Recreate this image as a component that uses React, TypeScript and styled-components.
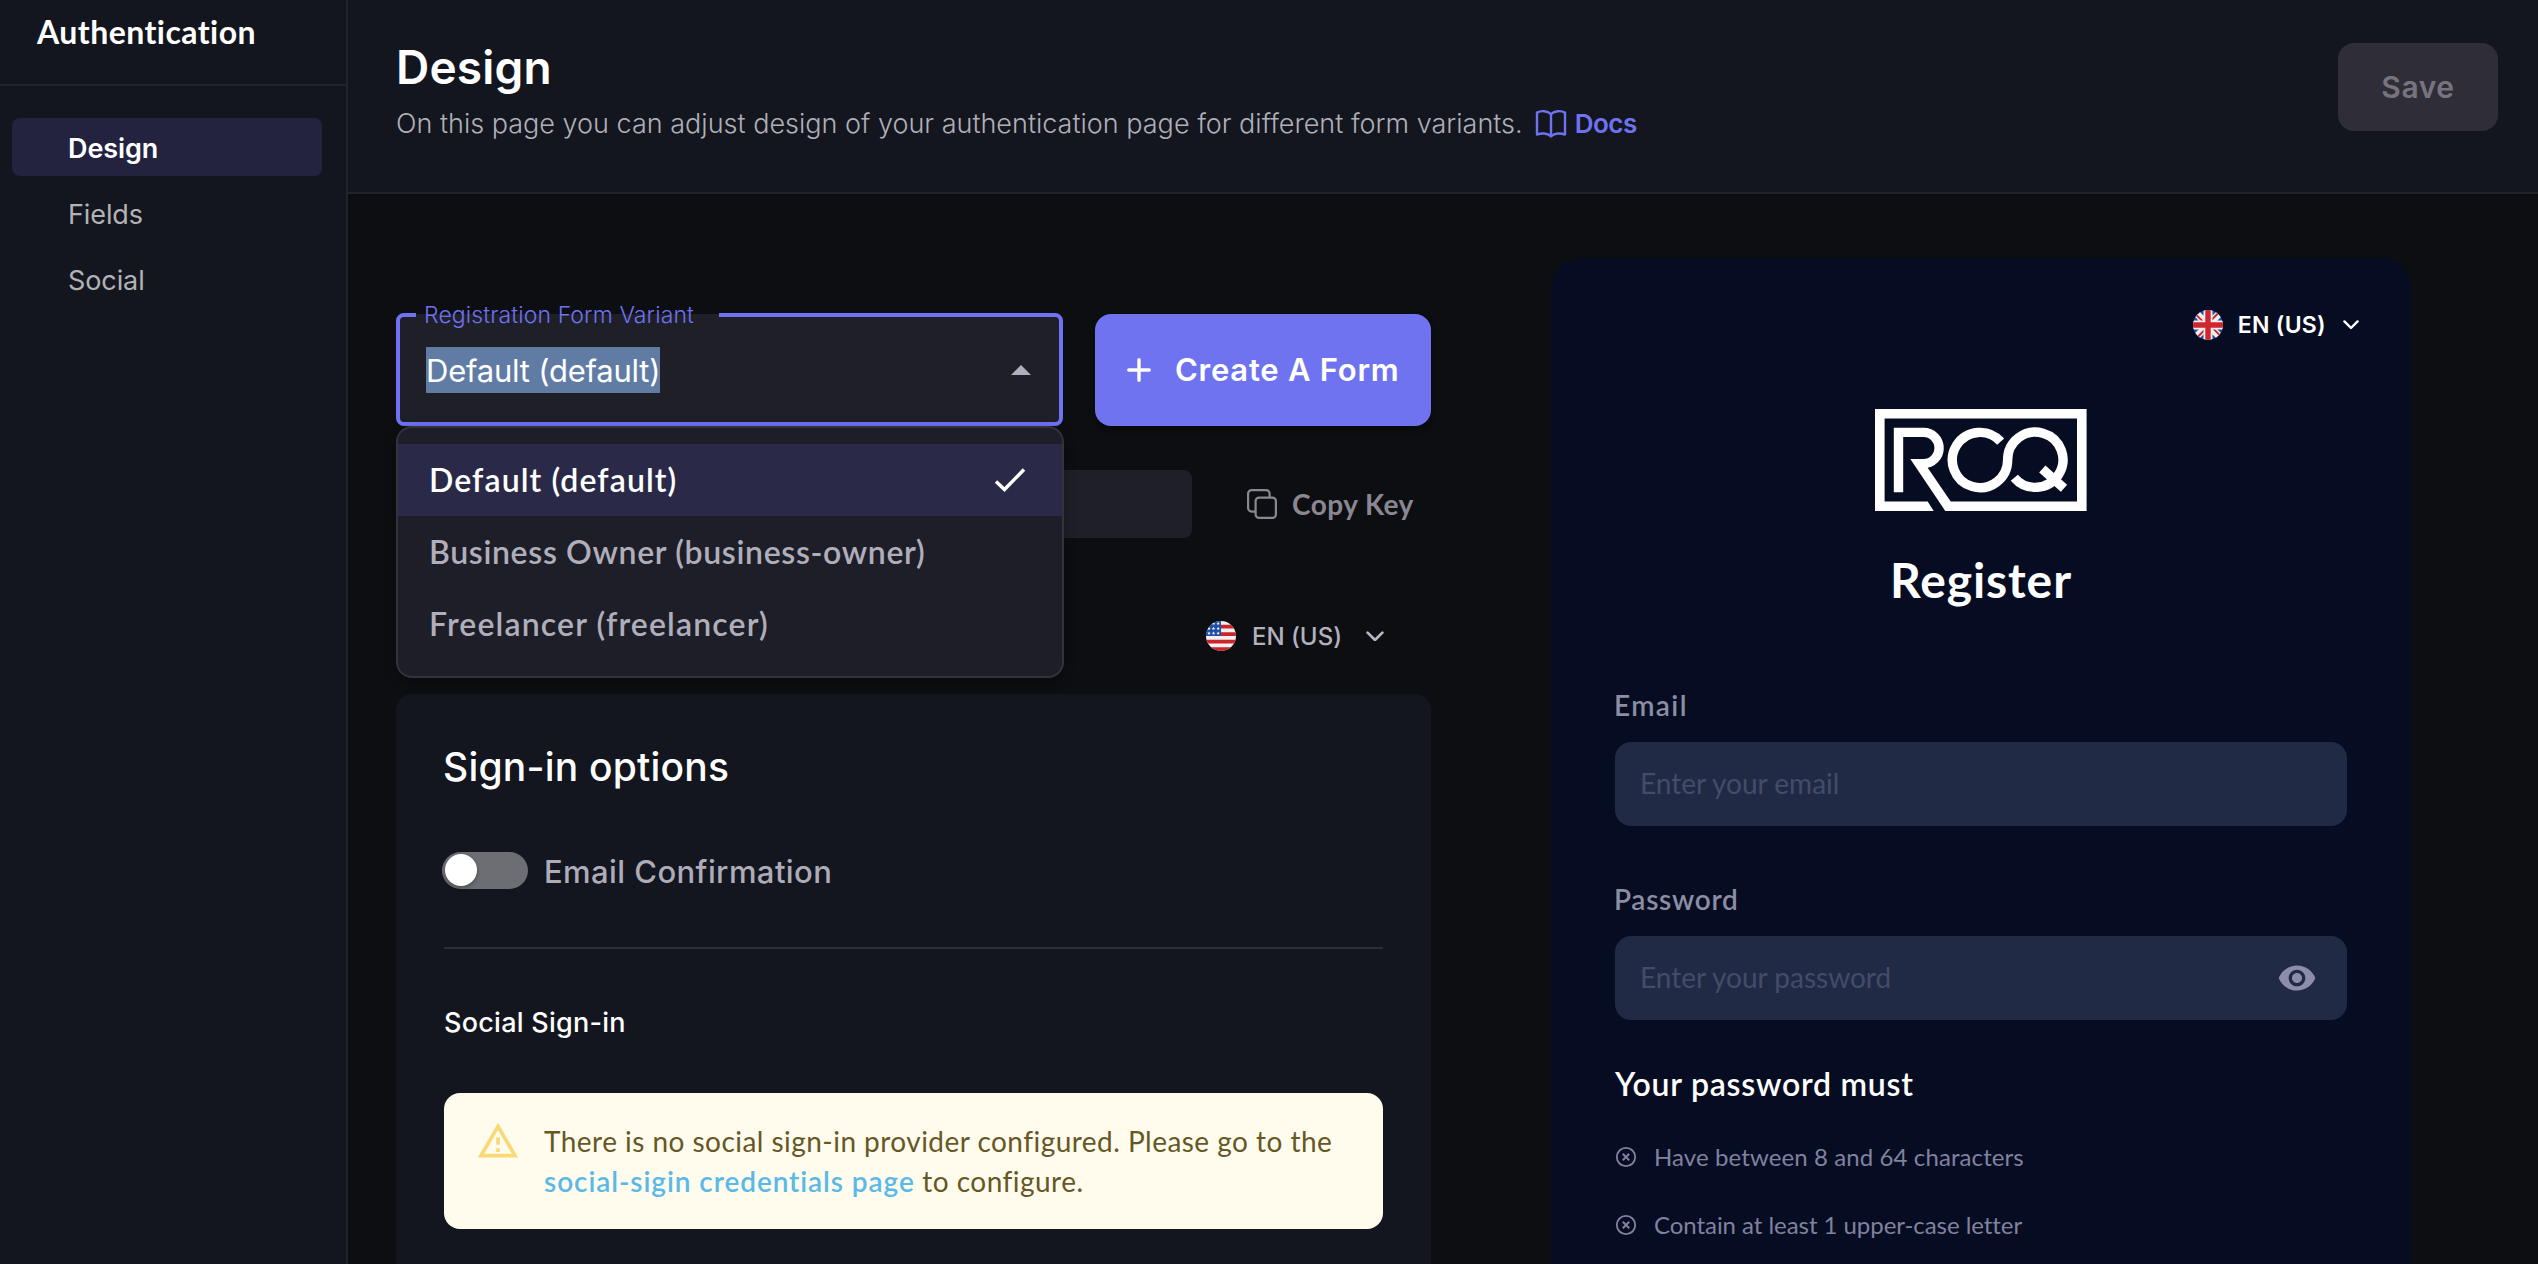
import React from 'react';
import styled, { createGlobalStyle, css } from 'styled-components';

const GlobalStyle = createGlobalStyle`
  * { box-sizing: border-box; }
  body {
    margin: 0;
    background: #0d0e11;
    color: #fff;
    font-family: Inter, 'Liberation Sans', sans-serif;
    font-variant-ligatures: none;
    overflow: hidden;
  }
  svg { display: block; flex: none; }
`;

const round = css`
  font-family: Lato, 'Liberation Sans', sans-serif;
`;

const Page = styled.div`
  display: grid;
  grid-template-columns: 348px 1fr;
  width: 2538px;
  height: 1264px;
  overflow: hidden;
`;

/* Sidebar */
const Sidebar = styled.aside`
  background: #13161e;
  border-right: 2px solid #22242b;
`;

const SidebarHeader = styled.div`
  ${round}
  height: 86px;
  padding: 12px 0 0 37px;
  border-bottom: 2px solid #22242b;
  font-size: 32px;
  font-weight: 700;
  line-height: 40px;
  letter-spacing: 0.45px;
`;

const Nav = styled.nav`
  display: flex;
  flex-direction: column;
  gap: 8px;
  padding: 32px 24px 0 12px;
`;

const NavItem = styled.a<{ $active?: boolean }>`
  height: 58px;
  padding: 2px 0 0 56px;
  border-radius: 8px;
  font-size: 27px;
  line-height: 58px;
  letter-spacing: -0.1px;
  font-weight: ${p => (p.$active ? 600 : 400)};
  color: ${p => (p.$active ? '#ffffff' : '#b3b3b6')};
  background: ${p => (p.$active ? '#232340' : 'transparent')};
`;

/* Page header */
const Main = styled.main`
  display: flex;
  flex-direction: column;
  min-width: 0;
`;

const Header = styled.header`
  display: flex;
  justify-content: space-between;
  align-items: flex-start;
  flex: none;
  height: 194px;
  padding: 39px 40px 0 48px;
  background: #13161e;
  border-bottom: 2px solid #22242b;
`;

const Title = styled.h1`
  margin: 0 0 11px;
  font-size: 46px;
  font-weight: 600;
  line-height: 56px;
  letter-spacing: 0.2px;
`;

const Subtitle = styled.div`
  display: flex;
  align-items: center;
  font-size: 27px;
  font-weight: 300;
  line-height: 36px;
  color: #b0afb9;
`;

const DocsLink = styled.a`
  display: flex;
  align-items: center;
  gap: 8px;
  margin-left: 12px;
  color: #6f72f1;
  font-size: 26px;
  font-weight: 600;
  letter-spacing: -0.5px;
`;

const SaveButton = styled.button`
  width: 160px;
  height: 88px;
  margin-top: 4px;
  padding: 0;
  border: 0;
  border-radius: 16px;
  background: #2e2d38;
  color: #77747f;
  font: 600 30px Inter, sans-serif;
  letter-spacing: 0.6px;
`;

/* Content */
const Content = styled.div`
  display: grid;
  grid-template-columns: 1035px 860px;
  column-gap: 120px;
  padding: 64px 0 0 48px;
`;

const Settings = styled.section`
  padding-top: 56px;
`;

const VariantRow = styled.div`
  display: grid;
  grid-template-columns: 667px 336px;
  gap: 32px;
`;

const Select = styled.div`
  position: relative;
  display: flex;
  align-items: center;
  justify-content: space-between;
  height: 112px;
  padding: 0 32px 0 30px;
  border-radius: 8px;
  background: #1f1f28;
`;

const SelectOutline = styled.fieldset`
  position: absolute;
  inset: -10px 0 0 0;
  min-width: 0;
  margin: 0;
  padding: 0 16px;
  border: 4px solid #6f72f1;
  border-radius: 8px;
  pointer-events: none;
`;

const SelectNotch = styled.legend`
  width: 303px;
  height: 22px;
  padding: 0;
`;

const SelectLabel = styled.label`
  position: absolute;
  top: -13px;
  left: 28px;
  color: #6f72f1;
  font-size: 23px;
  font-weight: 300;
  line-height: 28px;
  letter-spacing: 0.1px;
`;

const SelectValue = styled.span`
  padding-top: 1px;
  background: #607ca4;
  font-size: 31px;
  line-height: 45px;
  letter-spacing: -0.23px;
`;

const Menu = styled.ul`
  position: absolute;
  z-index: 2;
  top: 112px;
  left: 0;
  width: 668px;
  margin: 0;
  padding: 16px 0;
  list-style: none;
  border: 2px solid #33333e;
  border-radius: 16px;
  background: #1e1e28;
  box-shadow: 0 4px 12px rgba(0, 0, 0, 0.3);
`;

const MenuItem = styled.li<{ $selected?: boolean; $tracking: number }>`
  ${round}
  display: flex;
  align-items: center;
  justify-content: space-between;
  height: 72px;
  padding: 0 36px 1px 31px;
  font-size: 32px;
  font-weight: 600;
  letter-spacing: ${p => p.$tracking}px;
  color: ${p => (p.$selected ? '#ffffff' : '#b0aebb')};
  background: ${p => (p.$selected ? '#2a2a48' : 'transparent')};
`;

const CreateButton = styled.button`
  display: flex;
  align-items: center;
  gap: 24px;
  padding: 0 0 1px 32px;
  border: 0;
  border-radius: 16px;
  background: #6f73f0;
  color: #fff;
  font: 600 31px Inter, sans-serif;
  letter-spacing: 0.75px;
  box-shadow: 0 4px 6px rgba(0, 0, 0, 0.4);
`;

const KeyRow = styled.div`
  display: flex;
  align-items: center;
  margin-top: 44px;
`;

const KeyField = styled.div`
  width: 796px;
  height: 68px;
  border-radius: 8px;
  background: #1f1f28;
`;

const CopyKey = styled.button`
  ${round}
  display: flex;
  align-items: center;
  gap: 15px;
  margin-left: 55px;
  padding: 0;
  border: 0;
  background: none;
  color: #8a8793;
  font-size: 28px;
  font-weight: 700;
  letter-spacing: 0.45px;
`;

const LocaleRow = styled.div`
  display: flex;
  align-items: center;
  justify-content: flex-end;
  height: 60px;
  margin: 68px 47px 28px 0;
`;

const LocaleName = styled.span`
  margin: 0 24px 0 16px;
  color: #b3b1bd;
  font-size: 24px;
  font-weight: 500;
`;

const Card = styled.section`
  height: 640px;
  padding: 48px 48px 0;
  border-radius: 16px;
  background: #13161e;
`;

const CardTitle = styled.h2`
  margin: 0 0 0 -1px;
  font-size: 39px;
  font-weight: 500;
  line-height: 50px;
  letter-spacing: 0.2px;
`;

const ToggleRow = styled.label`
  display: flex;
  align-items: center;
  gap: 16px;
  height: 40px;
  margin: 58px 0 0 -2px;
`;

const Track = styled.span`
  display: flex;
  align-items: center;
  width: 86px;
  height: 37px;
  padding-left: 3px;
  border-radius: 19px;
  background: #6d6e74;
`;

const Knob = styled.span`
  width: 32px;
  height: 32px;
  border-radius: 50%;
  background: #fff;
  box-shadow: 0 2px 4px rgba(0, 0, 0, 0.3);
`;

const ToggleLabel = styled.span`
  padding-top: 2px;
  color: #aeacb9;
  font-size: 31px;
  font-weight: 500;
  letter-spacing: 0.42px;
`;

const Divider = styled.hr`
  height: 2px;
  margin: 57px 0 56px;
  border: 0;
  background: #2a2c37;
`;

const SectionTitle = styled.h3`
  margin: 0;
  font-size: 27px;
  font-weight: 500;
  line-height: 36px;
  letter-spacing: 0.25px;
`;

const Alert = styled.div`
  display: flex;
  gap: 24px;
  margin-top: 52px;
  padding: 26px 0 0 32px;
  height: 136px;
  border-radius: 16px;
  background: #fffcee;
`;

const AlertText = styled.p`
  ${round}
  margin: 2px 0 0;
  color: #665725;
  font-size: 28px;
  line-height: 40px;
  letter-spacing: 0.46px;
  white-space: nowrap;
`;

const AlertLink = styled.a`
  color: #5bb9e8;
  font-weight: 600;
  letter-spacing: 0.92px;
`;

/* Form preview */
const Preview = styled.section`
  display: flex;
  flex-direction: column;
  height: 1060px;
  padding: 52px 64px 0;
  border-radius: 30px;
  background: #060c21;
`;

const PreviewLocale = styled.div`
  display: flex;
  align-items: center;
  justify-content: flex-end;
  height: 30px;
  margin-right: -12px;
`;

const PreviewLocaleName = styled.span`
  margin: 0 17px 0 15px;
  font-size: 23px;
  font-weight: 600;
  letter-spacing: 0.3px;
`;

const Brand = styled.div`
  display: flex;
  justify-content: center;
  margin-top: 69px;
`;

const PreviewTitle = styled.h2`
  ${round}
  margin: 39px 0 77px;
  text-align: center;
  font-size: 48px;
  font-weight: 700;
  line-height: 60px;
  letter-spacing: 0.9px;
`;

const Field = styled.div`
  display: flex;
  flex-direction: column;
  gap: 19px;
  & + & { margin-top: 55px; }
`;

const FieldLabel = styled.label<{ $tracking: number }>`
  ${round}
  margin-left: -1px;
  color: #8d8da3;
  font-size: 28px;
  font-weight: 600;
  line-height: 36px;
  letter-spacing: ${p => p.$tracking}px;
`;

const InputBox = styled.div`
  display: flex;
  align-items: center;
  height: 84px;
  padding: 0 30px 0 25px;
  border-radius: 16px;
  background: #212a45;
`;

const Input = styled.input`
  ${round}
  flex: 1;
  min-width: 0;
  padding: 0 0 2px;
  border: 0;
  outline: 0;
  background: none;
  color: #fff;
  font-size: 28px;
  &::placeholder { color: #434c68; opacity: 1; }
`;

const RulesTitle = styled.h3`
  ${round}
  margin: 44px 0 35px;
  font-size: 32px;
  font-weight: 600;
  line-height: 40px;
  letter-spacing: 0.75px;
`;

const Rules = styled.ul`
  display: flex;
  flex-direction: column;
  gap: 32px;
  margin: 0;
  padding: 0;
  list-style: none;
`;

const Rule = styled.li<{ $tracking: number }>`
  ${round}
  display: flex;
  align-items: center;
  gap: 17px;
  color: #8181a0;
  font-size: 24px;
  line-height: 36px;
  letter-spacing: ${p => p.$tracking}px;
`;

/* Icons */
const BookIcon = () => (
  <svg width="32" height="30" viewBox="0 0 32 30" fill="none" stroke="currentColor" strokeWidth="2.4" strokeLinejoin="round" strokeLinecap="round">
    <path d="M16 5.2C12.4 1.6 6.2 1.3 2 3.6V25.6C6.4 23.8 12.4 24 16 27.4C19.6 24 25.6 23.8 30 25.6V3.6C25.8 1.3 19.6 1.6 16 5.2ZM16 5.2V27.4" />
  </svg>
);

const CheckIcon = () => (
  <svg width="32" height="26" viewBox="0 0 32 26" fill="none" stroke="#fff" strokeWidth="3.4">
    <path d="M2 14.5L10.500 22.500L30 2.500" />
  </svg>
);

const PlusIcon = () => (
  <svg width="24" height="24" viewBox="0 0 24 24" stroke="currentColor" strokeWidth="3.4" strokeLinecap="round">
    <path d="M12 1.8V22.2M1.8 12H22.2" />
  </svg>
);

const CopyIcon = () => (
  <svg width="30" height="30" viewBox="0 0 30 30" fill="none" stroke="currentColor" strokeWidth="2.2">
    <rect x="8.600" y="8.600" width="20.300" height="20.300" rx="3.500" />
    <path d="M22.600 8.600V4.600A3.500 3.500 0 0 0 19.100 1.100H4.600A3.500 3.500 0 0 0 1.100 4.600V19.100A3.500 3.500 0 0 0 4.600 22.600H8.600" />
  </svg>
);

const Chevron = ({ color, width }: { color: string; width: number }) => (
  <svg width={width} height={width * 0.6} viewBox="0 0 18 10.8" fill="none" stroke={color} strokeWidth="2.7" strokeLinecap="round" strokeLinejoin="round">
    <path d="M1.600 1.600L9 9L16.400 1.600" />
  </svg>
);

const WarningIcon = () => (
  <svg width="44" height="44" viewBox="0 0 24 24" fill="#f9d975">
    <path d="M12 5.99L19.53 19H4.47L12 5.99M12 2L1 21h22L12 2zm1 14h-2v2h2v-2zm0-6h-2v4h2v-4z" />
  </svg>
);

const EyeIcon = () => (
  <svg width="40" height="40" viewBox="0 0 24 24" fill="#8c8cab">
    <path d="M12 4.500C7 4.500 2.730 7.610 1 12c1.730 4.390 6 7.500 11 7.500s9.270-3.110 11-7.500c-1.730-4.390-6-7.500-11-7.500zM12 17c-2.760 0-5-2.240-5-5s2.240-5 5-5 5 2.240 5 5-2.240 5-5 5zm0-8c-1.660 0-3 1.340-3 3s1.340 3 3 3 3-1.340 3-3-1.340-3-3-3z" />
  </svg>
);

const CrossCircle = () => (
  <svg width="22" height="22" viewBox="0 0 22 22" fill="none" stroke="#8181a0" strokeWidth="1.8">
    <circle cx="11" cy="11" r="9.200" />
    <path d="M7.800 7.800L14.200 14.200M14.200 7.800L7.800 14.200" strokeWidth="2" />
  </svg>
);

const UsFlag = () => (
  <svg width="30" height="30" viewBox="0 0 30 30">
    <clipPath id="us"><circle cx="15" cy="15" r="15" /></clipPath>
    <g clipPath="url(#us)">
      <rect width="30" height="30" fill="#f0f0f0" />
      {[3.75, 11.25, 18.75, 26.25].map(y => <rect key={y} y={y} width="30" height="3.75" fill="#c9252c" />)}
      <rect width="15" height="15" fill="#1f4fa8" />
      {[2.5, 7.5, 12.3].map(y => [3, 7.5, 12.2].map(x => (
        <path key={`${x}-${y}`} transform={`translate(${x} ${y}) scale(1.7)`} fill="#fff" d="M0-1L.3-.3 1-.3.45.15.65.9 0 .45-.65.9-.45.15-1-.3-.3-.3Z" />
      )))}
    </g>
  </svg>
);

const UkFlag = () => (
  <svg width="30" height="30" viewBox="0 0 30 30">
    <clipPath id="uk"><circle cx="15" cy="15" r="15" /></clipPath>
    <g clipPath="url(#uk)">
      <rect width="30" height="30" fill="#1f4fa8" />
      <path d="M0 0L30 30M30 0L0 30" stroke="#f0f0f0" strokeWidth="7" />
      <path d="M3 4.600L14 15.600M27 25.400L16 14.400M25.400 3L14.400 14M4.600 27L15.600 16" stroke="#d0262d" strokeWidth="2" />
      <path d="M15 0V30M0 15H30" stroke="#f0f0f0" strokeWidth="9" />
      <path d="M15 0V30M0 15H30" stroke="#d0262d" strokeWidth="5.4" />
    </g>
  </svg>
);

const Logo = () => (
  <svg width="212" height="102" viewBox="0 0 212 102" fill="none" stroke="#fff" strokeWidth="9.4">
    <path fill="#fff" stroke="none" d="M0 0H211.600V102H70.300L35.300 50H50L52.700 58.700L75.700 92.500H202V9.500H9.600V92.500H52.700L58.700 102H0Z" />
    <path d="M23.500 83.300V23.400H48.500A15.600 15.600 0 0 1 48.500 54.600H44" />
    <path d="M125.700 32.700A27.650 27.650 0 1 0 132.650 51A27.650 27.650 0 1 1 139.300 68.700" />
    <path d="M167.300 60L189 79.300" />
  </svg>
);

const NAV = ['Design', 'Fields', 'Social'];

const VARIANTS = [
  { label: 'Default (default)', tracking: 1.1 },
  { label: 'Business Owner (business-owner)', tracking: 0.65 },
  { label: 'Freelancer (freelancer)', tracking: 1.15 },
];

const RULES = [
  { label: 'Have between 8 and 64 characters', tracking: 0.1 },
  { label: 'Contain at least 1 upper-case letter', tracking: -0.05 },
];

export default function App() {
  return (
    <>
      <GlobalStyle />
      <Page>
        <Sidebar>
          <SidebarHeader>Authentication</SidebarHeader>
          <Nav>
            {NAV.map((item, i) => <NavItem key={item} $active={i === 0}>{item}</NavItem>)}
          </Nav>
        </Sidebar>

        <Main>
          <Header>
            <div>
              <Title>Design</Title>
              <Subtitle>
                On this page you can adjust design of your authentication page for different form variants.
                <DocsLink><BookIcon />Docs</DocsLink>
              </Subtitle>
            </div>
            <SaveButton>Save</SaveButton>
          </Header>

          <Content>
            <Settings>
              <VariantRow>
                <Select>
                  <SelectOutline><SelectNotch /></SelectOutline>
                  <SelectLabel>Registration Form Variant</SelectLabel>
                  <SelectValue>Default (default)</SelectValue>
                  <svg width="20" height="10" viewBox="0 0 20 10"><path d="M0 10L10 0L20 10Z" fill="#b0aebb" /></svg>
                  <Menu>
                    {VARIANTS.map((v, i) => (
                      <MenuItem key={v.label} $selected={i === 0} $tracking={v.tracking}>
                        {v.label}
                        {i === 0 && <CheckIcon />}
                      </MenuItem>
                    ))}
                  </Menu>
                </Select>
                <CreateButton><PlusIcon />Create A Form</CreateButton>
              </VariantRow>

              <KeyRow>
                <KeyField />
                <CopyKey><CopyIcon />Copy Key</CopyKey>
              </KeyRow>

              <LocaleRow>
                <UsFlag />
                <LocaleName>EN (US)</LocaleName>
                <Chevron color="#b8b6c2" width={18} />
              </LocaleRow>

              <Card>
                <CardTitle>Sign-in options</CardTitle>
                <ToggleRow>
                  <Track><Knob /></Track>
                  <ToggleLabel>Email Confirmation</ToggleLabel>
                </ToggleRow>
                <Divider />
                <SectionTitle>Social Sign-in</SectionTitle>
                <Alert>
                  <WarningIcon />
                  <AlertText>
                    There is no social sign-in provider configured. Please go to the<br />
                    <AlertLink>social-sigin credentials page</AlertLink> to configure.
                  </AlertText>
                </Alert>
              </Card>
            </Settings>

            <Preview>
              <PreviewLocale>
                <UkFlag />
                <PreviewLocaleName>EN (US)</PreviewLocaleName>
                <Chevron color="#ffffff" width={16} />
              </PreviewLocale>
              <Brand><Logo /></Brand>
              <PreviewTitle>Register</PreviewTitle>
              <Field>
                <FieldLabel $tracking={1.4}>Email</FieldLabel>
                <InputBox><Input placeholder="Enter your email" /></InputBox>
              </Field>
              <Field>
                <FieldLabel $tracking={0.7}>Password</FieldLabel>
                <InputBox><Input placeholder="Enter your password" /><EyeIcon /></InputBox>
              </Field>
              <RulesTitle>Your password must</RulesTitle>
              <Rules>
                {RULES.map(rule => (
                  <Rule key={rule.label} $tracking={rule.tracking}><CrossCircle />{rule.label}</Rule>
                ))}
              </Rules>
            </Preview>
          </Content>
        </Main>
      </Page>
    </>
  );
}
